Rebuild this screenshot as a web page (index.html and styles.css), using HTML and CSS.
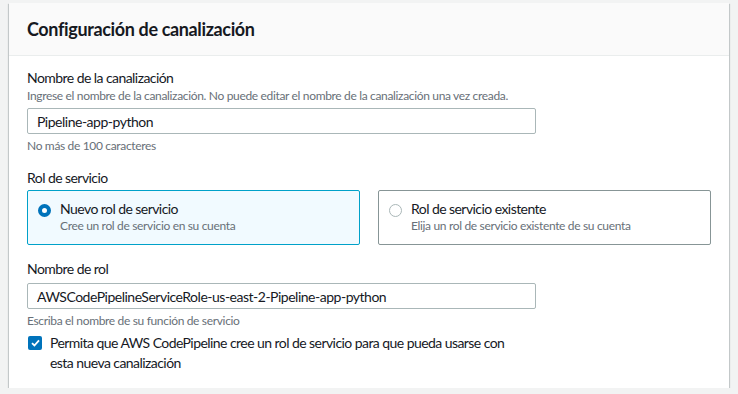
FILE: index.html
```html
<!DOCTYPE html>
<html lang="es">
<head>
    <meta charset="UTF-8">
    <title>Configuración de canalización</title>
    <link rel="stylesheet" href="styles.css">
</head>
<body>
    <div class="card">
        <div class="card-header">
            <h2>Configuración de canalización</h2>
        </div>
        <div class="card-body">
            <div class="field">
                <label class="label" for="pipeline-name">Nombre de la canalización</label>
                <p class="desc">Ingrese el nombre de la canalización. No puede editar el nombre de la canalización una vez creada.</p>
                <input type="text" id="pipeline-name" class="input" value="Pipeline-app-python">
                <p class="hint">No más de 100 caracteres</p>
            </div>

            <div class="field">
                <span class="label">Rol de servicio</span>
                <div class="tiles">
                    <div class="tile selected">
                        <span class="radio checked"></span>
                        <div>
                            <div class="tile-title">Nuevo rol de servicio</div>
                            <div class="tile-desc">Cree un rol de servicio en su cuenta</div>
                        </div>
                    </div>
                    <div class="tile">
                        <span class="radio"></span>
                        <div>
                            <div class="tile-title">Rol de servicio existente</div>
                            <div class="tile-desc">Elija un rol de servicio existente de su cuenta</div>
                        </div>
                    </div>
                </div>
            </div>

            <div class="field last">
                <label class="label" for="role-name">Nombre de rol</label>
                <input type="text" id="role-name" class="input" value="AWSCodePipelineServiceRole-us-east-2-Pipeline-app-python">
                <p class="hint">Escriba el nombre de su función de servicio</p>
                <div class="check-row">
                    <span class="checkbox">
                        <svg width="9" height="8" viewBox="0 0 9 8"><path d="M1 4.2 L3.4 6.5 L8 1.3" fill="none" stroke="#fff" stroke-width="1.8"/></svg>
                    </span>
                    <span class="check-text">Permita que AWS CodePipeline cree un rol de servicio para que pueda usarse con esta nueva canalización</span>
                </div>
            </div>
        </div>
    </div>
</body>
</html>
```

FILE: styles.css
```css
body {
    margin: 0;
    padding: 3px 9px 0;
    background-color: #f2f3f3;
    font-family: Lato, Roboto, "Liberation Sans", sans-serif;
    color: #16191f;
    letter-spacing: -0.035em;
}
.card {
    background-color: white;
    box-shadow: 0 1px 1px 0 rgba(0,28,36,0.3), 1px 1px 1px 0 rgba(0,28,36,0.15), -1px 1px 1px 0 rgba(0,28,36,0.15);
}
.card-header {
    height: 52px;
    padding: 0 18px;
    display: flex;
    align-items: center;
    background-color: #fafafa;
    border-bottom: 1px solid #eaeded;
}
.card-header h2 {
    margin: 0;
    font-size: 18px;
    line-height: 22px;
    font-weight: 700;
    letter-spacing: -0.02em;
}
.card-body {
    padding: 12px 18px 15px;
}
.field {
    margin-bottom: 14px;
}
.field.last {
    margin-bottom: 0;
}
.label {
    display: block;
    font-size: 14px;
    line-height: 20px;
}
.desc, .hint, .tile-desc {
    margin: 0;
    font-size: 12px;
    line-height: 16px;
    color: #687078;
    letter-spacing: -0.028em;
}
.desc {
    margin-bottom: 4px;
}
.hint {
    margin-top: 4px;
}
.input {
    display: block;
    box-sizing: border-box;
    width: 509px;
    height: 26px;
    padding: 0 9px;
    border: 1px solid #aab7b8;
    border-radius: 2px;
    font-family: inherit;
    font-size: 14px;
    letter-spacing: -0.035em;
    color: #16191f;
}
.field.last .label {
    margin-bottom: 4px;
}
.tiles {
    display: flex;
    gap: 18px;
    margin-top: 2px;
}
.tile {
    box-sizing: border-box;
    width: 333px;
    height: 55px;
    padding: 9px 10px;
    display: flex;
    align-items: flex-start;
    gap: 9px;
    border: 1px solid #879596;
    border-radius: 2px;
}
.tile.selected {
    border-color: #00a1c9;
    background-color: #f1faff;
}
.radio {
    box-sizing: border-box;
    flex: none;
    width: 13px;
    height: 13px;
    margin-top: 4px;
    border: 1px solid #aab7b8;
    border-radius: 50%;
    background: white;
}
.radio.checked {
    border: 4px solid #0073bb;
}
.tile-title {
    font-size: 14px;
    line-height: 18px;
}
.check-row {
    display: flex;
    gap: 8px;
    margin-top: 4px;
    width: 500px;
}
.checkbox {
    flex: none;
    box-sizing: border-box;
    width: 14px;
    height: 14px;
    margin: 3px 0 0 1px;
    border-radius: 2px;
    background-color: #0073bb;
    display: flex;
    align-items: center;
    justify-content: center;
}
.check-text {
    font-size: 14px;
    line-height: 20px;
}
```
